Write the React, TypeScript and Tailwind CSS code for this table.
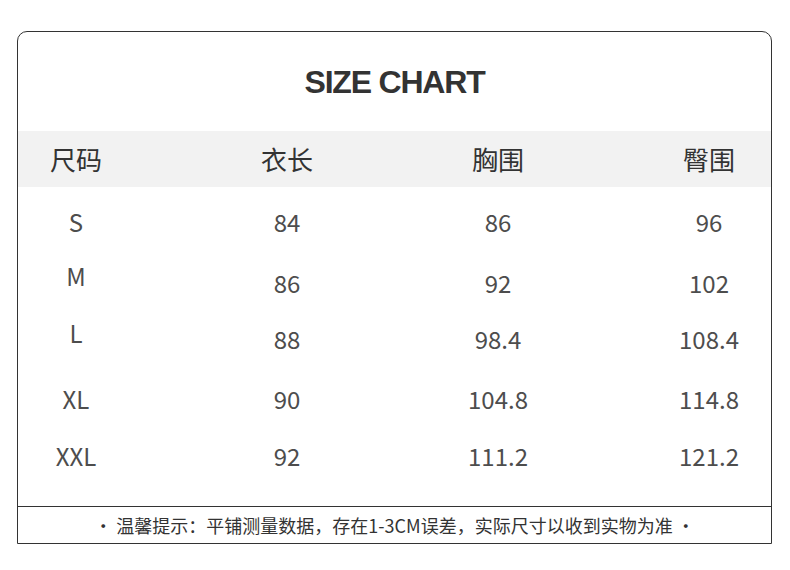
import React from "react";

const rows = [
  { size: "S", values: ["84", "86", "96"], gap: "mt-[15px]", shift: "" },
  { size: "M", values: ["86", "92", "102"], gap: "mt-[21px]", shift: "mb-[14px]" },
  { size: "L", values: ["88", "98.4", "108.4"], gap: "mt-[16px]", shift: "mb-[12px]" },
  { size: "XL", values: ["90", "104.8", "114.8"], gap: "mt-[20px]", shift: "" },
  { size: "XXL", values: ["92", "111.2", "121.2"], gap: "mt-[17px]", shift: "" },
];

const headers = ["尺码", "衣长", "胸围", "臀围"];

const cjk = "font-['Noto_Sans_CJK_SC','Noto_Sans',sans-serif]";

const SizeChart = () => {
  return (
    <div className="w-[790px] h-[570px] bg-white pt-[31px] pl-[17px]">
      <div className="w-[755px] border border-[#333] rounded-t-[10px] overflow-hidden">
        <div className="h-[99px] flex items-center justify-center">
          <h1 className="text-[32px] font-bold text-[#333] tracking-[-1.2px] font-['Liberation_Sans',sans-serif] pt-[1px]">
            SIZE CHART
          </h1>
        </div>

        <div className={`h-[56px] bg-[#f2f2f2] flex items-center pl-[8px] gap-[111px] ${cjk}`}>
          {headers.map((h, i) => (
            <div key={i} className="w-[100px] text-center text-[26px] text-[#333] leading-none">
              {h}
            </div>
          ))}
        </div>

        <div className={`h-[319px] flex flex-col ${cjk}`}>
          {rows.map((row, i) => (
            <div key={i} className={`h-[40px] flex items-center pl-[8px] gap-[111px] ${row.gap}`}>
              <div className={`w-[100px] text-center text-[24px] text-[#4d4d4d] leading-none ${row.shift}`}>
                {row.size}
              </div>
              {row.values.map((v, j) => (
                <div key={j} className="w-[100px] text-center text-[24px] text-[#4d4d4d] leading-none">
                  {v}
                </div>
              ))}
            </div>
          ))}
        </div>

        <div className={`h-[37px] border-t-[1.5px] border-[#333] flex items-center justify-center text-[18px] text-[#333] ${cjk}`}>
          · 温馨提示：平铺测量数据，存在1-3CM误差，实际尺寸以收到实物为准 ·
        </div>
      </div>
    </div>
  );
};

export default function App() {
  return <SizeChart />;
}
